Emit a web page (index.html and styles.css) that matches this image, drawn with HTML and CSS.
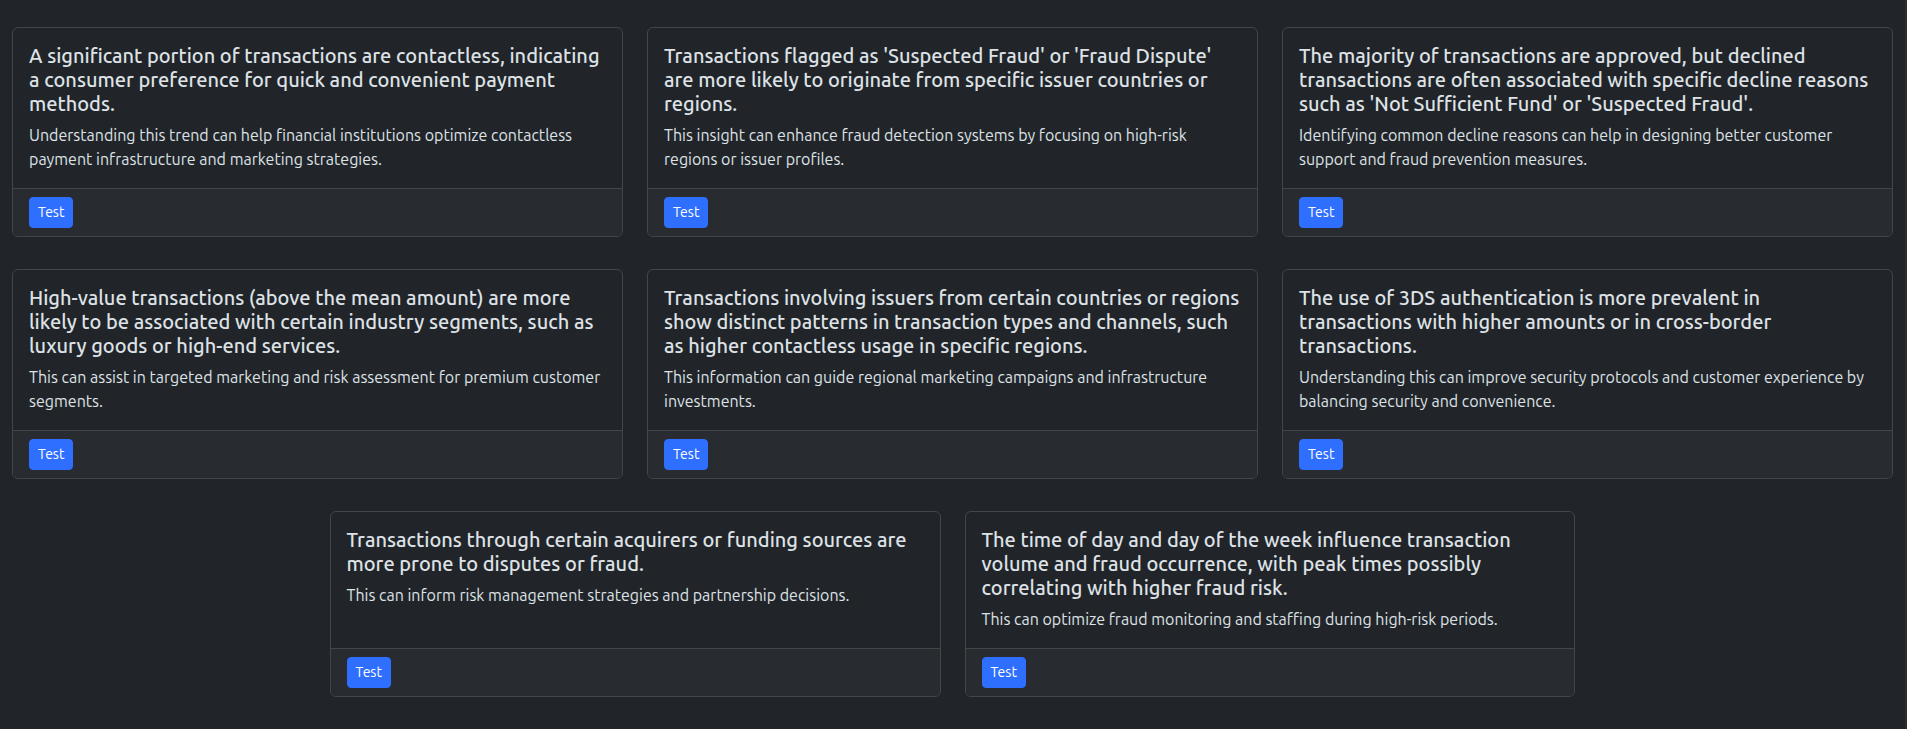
FILE: index.html
```html
<!DOCTYPE html>
<html lang="en">
<head>
<meta charset="utf-8">
<meta name="viewport" content="width=device-width, initial-scale=1">
<title>Insights</title>
<link rel="stylesheet" href="styles.css">
</head>
<body>
<main class="insights">
  <div class="col"><article class="card">
    <div class="card-body"><h5 class="card-title">A significant portion of transactions are contactless, indicating a consumer preference for quick and convenient payment methods.</h5>
    <p class="card-text">Understanding this trend can help financial institutions optimize contactless payment infrastructure and marketing strategies.</p></div>
    <div class="card-footer"><button type="button" class="btn">Test</button></div>
  </article></div>
  <div class="col"><article class="card">
    <div class="card-body"><h5 class="card-title">Transactions flagged as 'Suspected Fraud' or 'Fraud Dispute' are more likely to originate from specific issuer countries or regions.</h5>
    <p class="card-text">This insight can enhance fraud detection systems by focusing on high-risk regions or issuer profiles.</p></div>
    <div class="card-footer"><button type="button" class="btn">Test</button></div>
  </article></div>
  <div class="col"><article class="card">
    <div class="card-body"><h5 class="card-title">The majority of transactions are approved, but declined transactions are often associated with specific decline reasons such as 'Not Sufficient Fund' or 'Suspected Fraud'.</h5>
    <p class="card-text">Identifying common decline reasons can help in designing better customer support and fraud prevention measures.</p></div>
    <div class="card-footer"><button type="button" class="btn">Test</button></div>
  </article></div>
  <div class="col"><article class="card">
    <div class="card-body"><h5 class="card-title">High-value transactions (above the mean amount) are more likely to be associated with certain industry segments, such as luxury goods or high-end services.</h5>
    <p class="card-text">This can assist in targeted marketing and risk assessment for premium customer segments.</p></div>
    <div class="card-footer"><button type="button" class="btn">Test</button></div>
  </article></div>
  <div class="col"><article class="card">
    <div class="card-body"><h5 class="card-title">Transactions involving issuers from certain countries or regions show distinct patterns in transaction types and channels, such as higher contactless usage in specific regions.</h5>
    <p class="card-text">This information can guide regional marketing campaigns and infrastructure investments.</p></div>
    <div class="card-footer"><button type="button" class="btn">Test</button></div>
  </article></div>
  <div class="col"><article class="card">
    <div class="card-body"><h5 class="card-title">The use of 3DS authentication is more prevalent in transactions with higher amounts or in cross-border transactions.</h5>
    <p class="card-text">Understanding this can improve security protocols and customer experience by balancing security and convenience.</p></div>
    <div class="card-footer"><button type="button" class="btn">Test</button></div>
  </article></div>
  <div class="col"><article class="card">
    <div class="card-body"><h5 class="card-title">Transactions through certain acquirers or funding sources are more prone to disputes or fraud.</h5>
    <p class="card-text">This can inform risk management strategies and partnership decisions.</p></div>
    <div class="card-footer"><button type="button" class="btn">Test</button></div>
  </article></div>
  <div class="col"><article class="card">
    <div class="card-body"><h5 class="card-title">The time of day and day of the week influence transaction volume and fraud occurrence, with peak times possibly correlating with higher fraud risk.</h5>
    <p class="card-text">This can optimize fraud monitoring and staffing during high-risk periods.</p></div>
    <div class="card-footer"><button type="button" class="btn">Test</button></div>
  </article></div>
</main>
</body>
</html>
```
FILE: styles.css
```css
*, *::before, *::after { box-sizing: border-box; }

body {
  margin: 0;
  border-right: 2px solid #2d2d2d;
  background: #212529;
  color: #dee2e6;
  font: 400 16px/24px Ubuntu, "Noto Sans", "Open Sans", sans-serif;
}

.insights {
  display: flex;
  flex-wrap: wrap;
  justify-content: center;
  row-gap: 32px;
  padding: 27px 0 32px;
}

.col {
  display: flex;
  flex: 0 0 calc(100% / 3);
  padding: 0 12px;
}

.card {
  display: flex;
  flex: 1;
  flex-direction: column;
  min-width: 0;
  border: 1px solid #424649;
  border-radius: 6px;
  overflow: hidden;
}

.card-body { flex: 1; padding: 16px 16px 17px; }

.card-title {
  margin: 0 0 7px;
  font-size: 20px;
  font-weight: 500;
  line-height: 24px;
}

.card-text { margin: 0; }

.card-footer {
  display: flex;
  padding: 8px 16px;
  border-top: 1px solid #424649;
  background: #282b2f;
}

.btn {
  padding: 4px 8px;
  border: 1px solid #2f6fff;
  border-radius: 4px;
  background: #2f6fff;
  color: #fff;
  font: inherit;
  font-size: 14px;
  line-height: 21px;
}

@media (max-width: 991px) { .col { flex-basis: 50%; } }
@media (max-width: 575px) { .col { flex-basis: 100%; } }
```
